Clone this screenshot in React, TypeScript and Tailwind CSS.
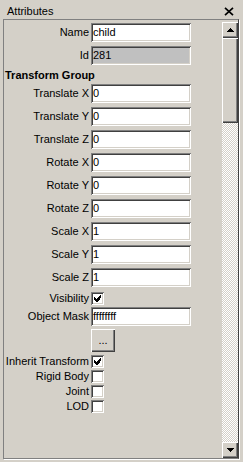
import React from 'react';

const sunken =
    'shadow-[inset_1px_1px_#808080,inset_-1px_-1px_#ffffff,inset_2px_2px_#404040,inset_-2px_-2px_#d4d0c8]';
const raised =
    'shadow-[inset_1px_1px_#ffffff,inset_-1px_-1px_#404040,inset_-2px_-2px_#808080]';

function Label({ children }: { children: React.ReactNode }) {
    return <span className="w-[85px] shrink-0 text-right whitespace-nowrap">{children}</span>;
}

function Field({ label, value, disabled = false, className = '' }: { label: string; value: string; disabled?: boolean; className?: string }) {
    return (
        <div className={`flex items-center h-[19px] ${className}`}>
            <Label>{label}</Label>
            <div
                className={`ml-[2px] w-[100px] h-[19px] flex items-center pl-[2px] ${sunken} ${
                    disabled ? 'bg-[#c0c0c0]' : 'bg-white'
                }`}
            >
                {value}
            </div>
        </div>
    );
}

function Check({ label, checked = false, className = '' }: { label: string; checked?: boolean; className?: string }) {
    return (
        <div className={`flex items-center h-[13px] ${className}`}>
            <Label>{label}</Label>
            <div className={`ml-[2px] w-[13px] h-[13px] bg-white relative ${sunken}`}>
                {checked && (
                    <svg width="7" height="7" viewBox="0 0 7 7" className="absolute left-[3px] top-[3px]" shapeRendering="crispEdges">
                        <path
                            fill="#000"
                            d="M6 0h1v3h-1zM5 1h1v4h-1zM4 2h1v4h-1zM3 3h1v4h-1zM2 4h1v3h-1zM1 3h1v3h-1zM0 2h1v3h-1z"
                        />
                    </svg>
                )}
            </div>
        </div>
    );
}

function Arrow({ down = false }: { down?: boolean }) {
    return (
        <svg width="7" height="4" viewBox="0 0 7 4" shapeRendering="crispEdges">
            <path fill="#000" d={down ? 'M0 0h7v1h-7zM1 1h5v1h-5zM2 2h3v1h-3zM3 3h1v1h-1z' : 'M3 0h1v1h-1zM2 1h3v1h-3zM1 2h5v1h-5zM0 3h7v1h-7z'} />
        </svg>
    );
}

export default function App() {
    return (
        <div className="w-[243px] h-[462px] bg-[#d4d0c8] font-['Liberation_Sans',Arial,sans-serif] text-[11px] text-black overflow-hidden">
            <div className="mt-[4px] h-[15px] w-[239px] flex items-center justify-between pl-[7px] pr-[5px]">
                <span>Attributes</span>
                <svg width="10" height="9" viewBox="0 0 10 9">
                    <path d="M1 0.8L9 8.2M9 0.8L1 8.2" stroke="#000" strokeWidth="1.7" />
                </svg>
            </div>
            <div className="ml-[3px] w-[236px] h-[440px] border-l border-t border-b border-[#808080] border-r border-r-[#404040] flex shadow-[1px_1px_#ffffff]">
                <div className="flex-1 flex flex-col pt-[3px]">
                    <Field label="Name" value="child" />
                    <Field label="Id" value="281" disabled className="mt-[4px]" />
                    <div className="h-[19px] pt-[4px] pl-[1px] font-bold leading-[13px]">Transform Group</div>
                    <Field label="Translate X" value="0" />
                    <Field label="Translate Y" value="0" className="mt-[4px]" />
                    <Field label="Translate Z" value="0" className="mt-[4px]" />
                    <Field label="Rotate X" value="0" className="mt-[4px]" />
                    <Field label="Rotate Y" value="0" className="mt-[4px]" />
                    <Field label="Rotate Z" value="0" className="mt-[4px]" />
                    <Field label="Scale X" value="1" className="mt-[4px]" />
                    <Field label="Scale Y" value="1" className="mt-[4px]" />
                    <Field label="Scale Z" value="1" className="mt-[4px]" />
                    <Check label="Visibility" checked className="mt-[5px]" />
                    <Field label="Object Mask" value="ffffffff" className="mt-[2px]" />
                    <div className="mt-[3px] flex">
                        <span className="w-[85px] shrink-0" />
                        <button className={`ml-[2px] w-[24px] h-[23px] bg-[#d4d0c8] flex items-center justify-center ${raised}`}>
                            ...
                        </button>
                    </div>
                    <Check label="Inherit Transform" checked className="mt-[3px]" />
                    <Check label="Rigid Body" className="mt-[2px]" />
                    <Check label="Joint" className="mt-[2px]" />
                    <Check label="LOD" className="mt-[2px]" />
                </div>
                <div className="w-[16px] mt-[2px] flex flex-col">
                    <div className={`h-[16px] flex items-center justify-center bg-[#d4d0c8] ${raised}`}>
                        <Arrow />
                    </div>
                    <div className={`h-[85px] bg-[#d4d0c8] ${raised}`} />
                    <div className="flex-1 bg-[image:repeating-conic-gradient(#ffffff_0%_25%,#d4d0c8_0%_50%)] bg-[length:2px_2px]" />
                    <div className={`h-[16px] flex items-center justify-center bg-[#d4d0c8] ${raised}`}>
                        <Arrow down />
                    </div>
                </div>
            </div>
        </div>
    );
}
